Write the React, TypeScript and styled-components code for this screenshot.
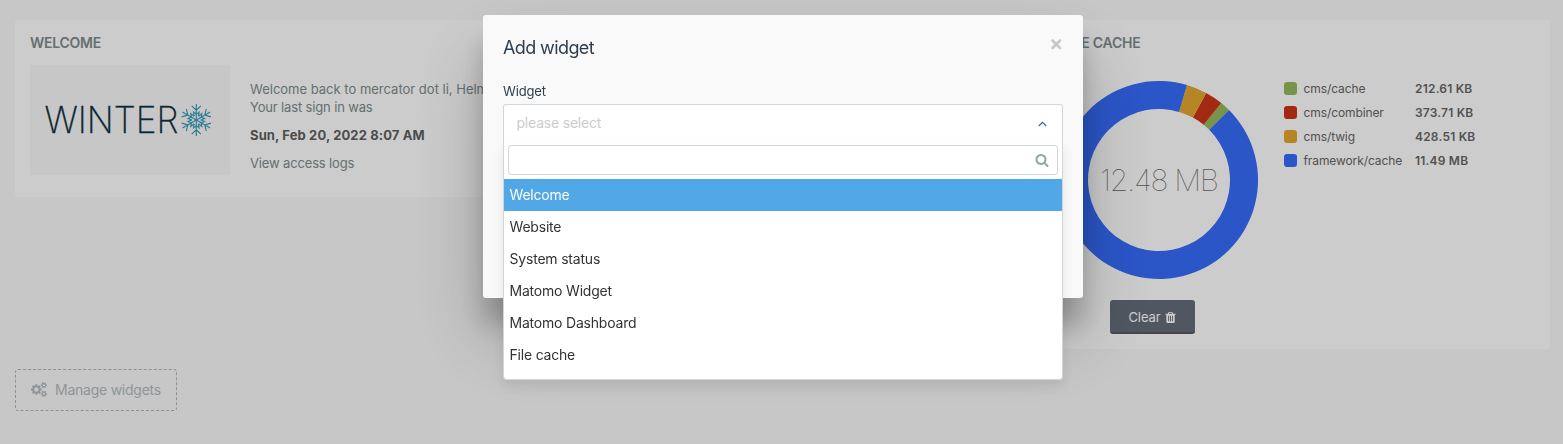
import React from "react";
import styled, { createGlobalStyle } from "styled-components";

const GlobalStyle = createGlobalStyle`
  *, *::before, *::after { box-sizing: border-box; }
  html, body { margin: 0; height: 100%; }
  body {
    background: #f9f9f9;
    font-family: Inter, "Liberation Sans", sans-serif;
    font-size: 13px;
    color: #666;
    overflow: hidden;
  }
  p { margin: 0; }
`;

const Dashboard = styled.main`
  height: 444px;
  padding: 20px 13px 0 15px;
`;

const Widgets = styled.div`
  display: flex;
  justify-content: space-between;
  align-items: flex-start;
  margin-bottom: 20px;
`;

const Card = styled.section<{ $width: number; $height: number }>`
  width: ${(p) => p.$width}px;
  height: ${(p) => p.$height}px;
  padding: 15px;
  background: #fff;
  border-radius: 3px;
`;

const CardTitle = styled.h3<{ $indent?: number }>`
  margin: 0;
  padding-left: ${(p) => p.$indent ?? 0}px;
  height: 16px;
  font-size: 14px;
  line-height: 16px;
  font-weight: 600;
  letter-spacing: -0.25px;
  color: #7e8c8d;
  text-transform: uppercase;
  white-space: nowrap;
`;

const WelcomeBody = styled.div`
  display: flex;
  gap: 20px;
  margin-top: 14px;
`;

const LogoBox = styled.div`
  width: 200px;
  height: 110px;
  background: #f9f9f9;
`;

const WelcomeText = styled.div`
  padding-top: 15px;
  color: #7e8c8d;
  line-height: 18px;
  letter-spacing: -0.15px;
  white-space: nowrap;
  strong {
    display: block;
    margin: 10px 0;
    color: #5e5e5e;
    font-weight: 700;
    letter-spacing: 0.12px;
  }
`;

const Greeting = styled.p`
  letter-spacing: 0;
`;

const CacheBody = styled.div`
  display: flex;
  gap: 26px;
  margin-top: 30px;
  padding-left: 5px;
`;

const Legend = styled.ul`
  list-style: none;
  margin: -4px 0 0;
  padding: 0;
  font-size: 12px;
  color: #666;
`;

const LegendRow = styled.li`
  display: grid;
  grid-template-columns: 19.5px 111.5px auto;
  align-items: center;
  height: 24px;
  line-height: 16px;
  white-space: nowrap;
  letter-spacing: -0.1px;
  strong {
    font-weight: 600;
    letter-spacing: 0.2px;
  }
`;

const Swatch = styled.i<{ $color: string }>`
  width: 13px;
  height: 13px;
  margin-bottom: 2px;
  border-radius: 3px;
  background: ${(p) => p.$color};
`;

const ClearButton = styled.button`
  display: flex;
  align-items: center;
  justify-content: center;
  gap: 3px;
  width: 85px;
  height: 34px;
  margin: 18px 0 0 50px;
  padding: 2px 0 0;
  border: 0;
  border-bottom: 2px solid #545961;
  border-radius: 3px;
  background: #656d79;
  color: #fff;
  font: inherit;
  line-height: 18px;
  letter-spacing: -0.1px;
`;

const ManageButton = styled.button`
  display: flex;
  align-items: center;
  gap: 8px;
  width: 162px;
  height: 42px;
  padding: 0 14px 1px 15px;
  border: 1px dashed #aeb6bb;
  border-radius: 3px;
  background: transparent;
  color: #b3bbc0;
  font: inherit;
  font-size: 14px;
  letter-spacing: -0.25px;
  white-space: nowrap;
`;

const Overlay = styled.div`
  position: fixed;
  inset: 0;
  display: flex;
  justify-content: center;
  align-items: flex-start;
  padding-top: 15px;
  background: rgba(0, 0, 0, 0.2);
`;

const Dialog = styled.div`
  width: 600px;
  height: 283px;
  margin-left: 3px;
  padding: 22px 20px;
  background: #f9f9f9;
  border-radius: 3px;
  box-shadow: 0 27px 24px 0 rgba(0, 0, 0, 0.2), 0 40px 77px 0 rgba(0, 0, 0, 0.22);
`;

const DialogHeader = styled.header`
  display: flex;
  justify-content: space-between;
  height: 22px;
`;

const DialogTitle = styled.h4`
  margin: 0;
  font-size: 18px;
  line-height: 22px;
  font-weight: 400;
  letter-spacing: -0.6px;
  color: #2b3e50;
`;

const CloseButton = styled.button`
  width: 12px;
  height: 12px;
  margin: 1px 1px 0 0;
  padding: 0;
  border: 0;
  background: none;
  svg { display: block; }
`;

const FieldLabel = styled.label`
  display: block;
  margin: 24px 0 4px;
  line-height: 17px;
  letter-spacing: -0.15px;
  color: #2b3e50;
`;

const Select = styled.div`
  position: relative;
  display: flex;
  align-items: center;
  justify-content: space-between;
  height: 38px;
  padding: 0 15px 0 12.5px;
  border: 1px solid #d1d6d9;
  border-bottom: 0;
  border-radius: 3px 3px 0 0;
  background: #fff;
  font-size: 14px;
`;

const Placeholder = styled.span`
  padding-bottom: 2px;
  color: #ccc;
  letter-spacing: -0.2px;
`;

const Menu = styled.div`
  position: absolute;
  top: 37px;
  left: -1px;
  right: -1px;
  height: 238px;
  padding-top: 3px;
  border: 1px solid #d1d6d9;
  border-top: 0;
  border-radius: 0 0 4px 4px;
  background: #fff;
  box-shadow: 0 6px 12px rgba(0, 0, 0, 0.08);
`;

const SearchBox = styled.div`
  display: flex;
  align-items: center;
  justify-content: flex-end;
  height: 30px;
  margin: 0 4px 4px;
  padding-right: 8px;
  border: 1px solid #d1d6d9;
  border-radius: 3px;
  color: #95a5a6;
`;

const Option = styled.div<{ $active?: boolean }>`
  height: 32px;
  padding-left: 5.5px;
  line-height: 32px;
  letter-spacing: -0.2px;
  color: ${(p) => (p.$active ? "#fff" : "#333")};
  background: ${(p) => (p.$active ? "#52a7e6" : "transparent")};
`;

const icons = {
  trash:
    "M704 1376v-704q0-14-9-23t-23-9h-64q-14 0-23 9t-9 23v704q0 14 9 23t23 9h64q14 0 23-9t9-23zm256 0v-704q0-14-9-23t-23-9h-64q-14 0-23 9t-9 23v704q0 14 9 23t23 9h64q14 0 23-9t9-23zm256 0v-704q0-14-9-23t-23-9h-64q-14 0-23 9t-9 23v704q0 14 9 23t23 9h64q14 0 23-9t9-23zm-544-992h448l-48-117q-7-9-17-11h-317q-10 2-17 11zm928 32v64q0 14-9 23t-23 9h-96v948q0 83-47 143.5t-113 60.5h-832q-66 0-113-58.5t-47-141.5v-952h-96q-14 0-23-9t-9-23v-64q0-14 9-23t23-9h309l70-167q15-37 54-63t79-26h320q40 0 79 26t54 63l70 167h309q14 0 23 9t9 23z",
  search:
    "M1216 832q0-185-131.5-316.5t-316.5-131.5-316.5 131.5-131.5 316.5 131.5 316.5 316.5 131.5 316.5-131.5 131.5-316.5zm512 832q0 52-38 90t-90 38q-54 0-90-38l-343-342q-179 124-399 124-143 0-273.5-55.5t-225-150-150-225-55.5-273.5 55.5-273.5 150-225 225-150 273.5-55.5 273.5 55.5 225 150 150 225 55.5 273.5q0 220-124 399l343 343q37 37 37 90z",
  cogs:
    "M896 896q0-106-75-181t-181-75-181 75-75 181 75 181 181 75 181-75 75-181zm768 512q0-52-38-90t-90-38-90 38-38 90q0 53 37.5 90.5t90.5 37.5 90.5-37.5 37.5-90.5zm0-1024q0-52-38-90t-90-38-90 38-38 90q0 53 37.5 90.5t90.5 37.5 90.5-37.5 37.5-90.5zm-384 421v185q0 10-7 19.5t-16 10.5l-155 24q-11 35-32 76 34 48 90 115 7 11 7 20 0 12-7 19-23 30-82.5 89.5t-78.5 59.5q-11 0-21-7l-115-90q-37 19-77 31-11 108-23 155-7 24-30 24h-186q-11 0-20-7.5t-10-17.5l-23-153q-34-10-75-31l-118 89q-7 7-20 7-11 0-21-8-144-133-144-160 0-9 7-19 10-14 41-53t47-61q-23-44-35-82l-152-24q-10-1-17-9.5t-7-19.5v-185q0-10 7-19.5t16-10.5l155-24q11-35 32-76-34-48-90-115-7-11-7-20 0-12 7-20 22-30 82-89t79-59q11 0 21 7l115 90q34-18 77-32 11-108 23-154 7-24 30-24h186q11 0 20 7.5t10 17.5l23 153q34 10 75 31l118-89q8-7 20-7 11 0 21 8 144 133 144 160 0 8-7 19-12 16-42 54t-45 60q23 48 34 82l152 23q10 2 17 10.5t7 19.5zm640 533v140q0 16-149 31-12 27-30 52 51 113 51 138 0 4-4 7-122 71-124 71-8 0-46-47t-52-68q-20 2-30 2t-30-2q-14 21-52 68t-46 47q-2 0-124-71-4-3-4-7 0-25 51-138-18-25-30-52-149-15-149-31v-140q0-16 149-31 13-29 30-52-51-113-51-138 0-4 4-7 4-2 35-20t59-34 30-16q8 0 46 46.5t52 67.5q20-2 30-2t30 2q51-71 92-112l6-2q4 0 124 70 4 3 4 7 0 25-51 138 17 23 30 52 149 15 149 31zm0-1024v140q0 16-149 31-12 27-30 52 51 113 51 138 0 4-4 7-122 71-124 71-8 0-46-47t-52-68q-20 2-30 2t-30-2q-14 21-52 68t-46 47q-2 0-124-71-4-3-4-7 0-25 51-138-18-25-30-52-149-15-149-31v-140q0-16 149-31 13-29 30-52-51-113-51-138 0-4 4-7 4-2 35-20t59-34 30-16q8 0 46 46.5t52 67.5q20-2 30-2t30 2q51-71 92-112l6-2q4 0 124 70 4 3 4 7 0 25-51 138 17 23 30 52 149 15 149 31z",
};

function Icon({ name, size, width = 1792 }: { name: keyof typeof icons; size: number; width?: number }) {
  return (
    <svg width={(size * width) / 1792} height={size} viewBox={`0 0 ${width} 1792`} fill="currentColor">
      <path d={icons[name]} />
    </svg>
  );
}

function WinterLogo() {
  return (
    <svg width="200" height="110" viewBox="0 0 200 110">
      <text
        x="14.5"
        y="68.3"
        fontFamily="Inter, sans-serif"
        fontWeight="200"
        fontSize="37"
        textLength="134"
        lengthAdjust="spacingAndGlyphs"
        fill="#103141"
        stroke="#103141"
        strokeWidth="0.3"
      >
        WINTER
      </text>
      <g transform="translate(166.3 55)" fill="none" stroke="#3499b9" strokeWidth="1.1">
        {[0, 60, 120, 180, 240, 300].map((a) => (
          <path key={a} transform={`rotate(${a})`} d="M0 0V-16M-4.6-14.2L0-9.8L4.6-14.2M-2.2-3.8L-2.8-8L0-5.6L2.8-8L2.2-3.8" />
        ))}
      </g>
    </svg>
  );
}

const cacheItems = [
  { name: "cms/cache", size: "212.61 KB", value: 212.61, color: "#95bb5b" },
  { name: "cms/combiner", size: "373.71 KB", value: 373.71, color: "#cc3517" },
  { name: "cms/twig", size: "428.51 KB", value: 428.51, color: "#e3a730" },
  { name: "framework/cache", size: "11.49 MB", value: 11765.8, color: "#366cfb" },
];

function Donut() {
  const total = cacheItems.reduce((sum, item) => sum + item.value, 0);
  let end = 45;
  const point = (r: number, deg: number) => {
    const t = (deg * Math.PI) / 180;
    return `${99 + r * Math.sin(t)} ${99 - r * Math.cos(t)}`;
  };
  return (
    <svg width="198" height="198" viewBox="0 0 198 198">
      {cacheItems.map((item) => {
        const sweep = (item.value / total) * 360;
        const start = end - sweep;
        const large = sweep > 180 ? 1 : 0;
        const d = `M${point(99, start)}A99 99 0 ${large} 1 ${point(99, end)}L${point(71, end)}A71 71 0 ${large} 0 ${point(71, start)}Z`;
        end = start;
        return <path key={item.name} d={d} fill={item.color} />;
      })}
      <text x="99.5" y="110" textAnchor="middle" fontSize="30" fontWeight="100" textLength="119" fill="#666">
        12.48 MB
      </text>
    </svg>
  );
}

const options = ["Welcome", "Website", "System status", "Matomo Widget", "Matomo Dashboard", "File cache"];

export default function App() {
  return (
    <>
      <GlobalStyle />
      <Dashboard>
        <Widgets>
          <Card $width={500} $height={177}>
            <CardTitle>Welcome</CardTitle>
            <WelcomeBody>
              <LogoBox>
                <WinterLogo />
              </LogoBox>
              <WelcomeText>
                <Greeting>Welcome back to mercator dot li, Helmut</Greeting>
                <p>Your last sign in was</p>
                <strong>Sun, Feb 20, 2022 8:07 AM</strong>
                <p>View access logs</p>
              </WelcomeText>
            </WelcomeBody>
          </Card>
          <Card $width={510} $height={329}>
            <CardTitle $indent={7}>File cache</CardTitle>
            <CacheBody>
              <div>
                <Donut />
                <ClearButton>
                  Clear <Icon name="trash" size={13} />
                </ClearButton>
              </div>
              <Legend>
                {cacheItems.map((item) => (
                  <LegendRow key={item.name}>
                    <Swatch $color={item.color} />
                    <span>{item.name}</span>
                    <strong>{item.size}</strong>
                  </LegendRow>
                ))}
              </Legend>
            </CacheBody>
          </Card>
        </Widgets>
        <ManageButton>
          <Icon name="cogs" size={15} width={1920} />
          Manage widgets
        </ManageButton>
      </Dashboard>
      <Overlay>
        <Dialog>
          <DialogHeader>
            <DialogTitle>Add widget</DialogTitle>
            <CloseButton aria-label="Close">
              <svg width="12" height="12" viewBox="0 0 12 12" stroke="#c8c8c8" strokeWidth="2.6" strokeLinecap="round">
                <path d="M2.5 2.5L10 10M10 2.5L2.5 10" />
              </svg>
            </CloseButton>
          </DialogHeader>
          <FieldLabel>Widget</FieldLabel>
          <Select>
            <Placeholder>please select</Placeholder>
            <svg width="9" height="6" viewBox="0 0 9 6" fill="none" stroke="#4a639b" strokeWidth="1.3">
              <path d="M0.8 5L4.5 1.3L8.2 5" />
            </svg>
            <Menu>
              <SearchBox>
                <Icon name="search" size={14} />
              </SearchBox>
              {options.map((label, i) => (
                <Option key={label} $active={i === 0}>
                  {label}
                </Option>
              ))}
            </Menu>
          </Select>
        </Dialog>
      </Overlay>
    </>
  );
}
